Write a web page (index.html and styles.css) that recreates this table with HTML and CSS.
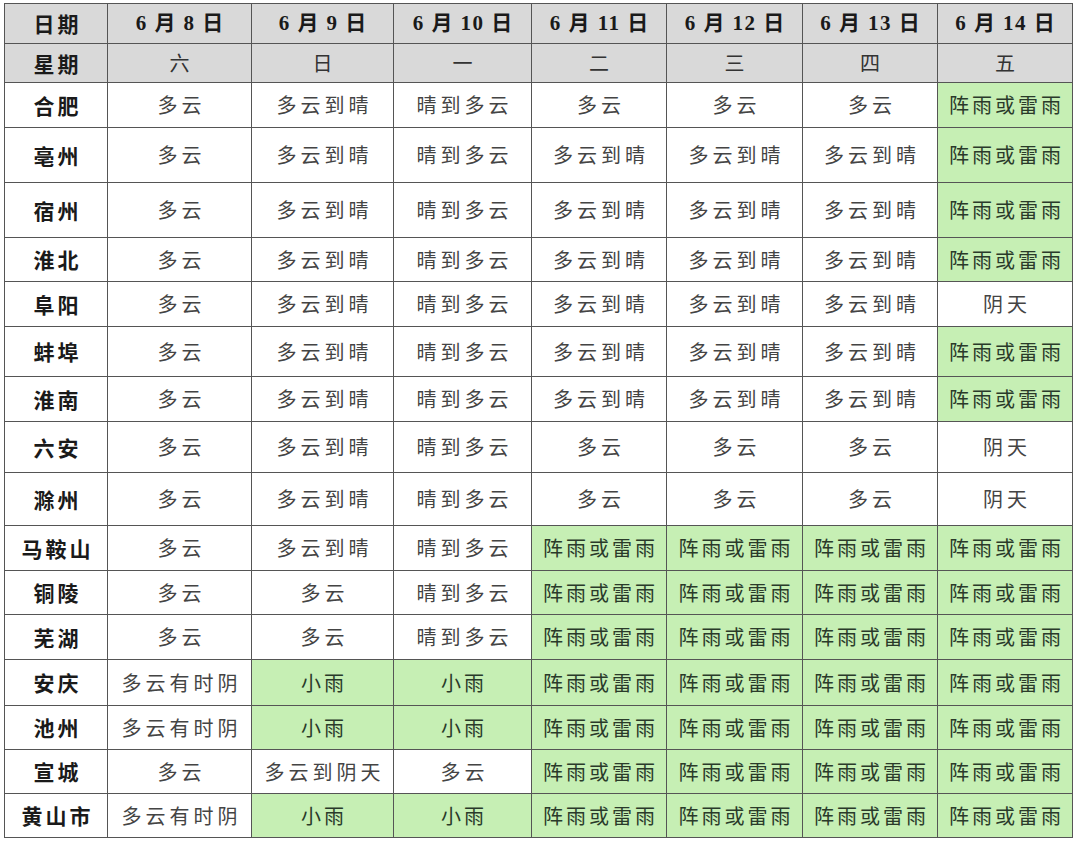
FILE: index.html
```html
<!DOCTYPE html>
<html lang="zh">
<head>
<meta charset="utf-8">
<link rel="stylesheet" href="styles.css">
</head>
<body>
<table class="wx">
<colgroup>
<col class="c0"><col class="c1"><col class="c2"><col class="c3"><col class="c4"><col class="c5"><col class="c6"><col class="c7">
</colgroup>
<tr class="hd r40"><th class="city">日期</th><th>6 月 8 日</th><th>6 月 9 日</th><th>6 月 10 日</th><th>6 月 11 日</th><th>6 月 12 日</th><th>6 月 13 日</th><th>6 月 14 日</th></tr>
<tr class="hd wk r39"><th class="city">星期</th><td>六</td><td>日</td><td>一</td><td>二</td><td>三</td><td>四</td><td>五</td></tr>
<tr class="r45"><th class="city">合肥</th><td>多云</td><td>多云到晴</td><td>晴到多云</td><td>多云</td><td>多云</td><td>多云</td><td class="g">阵雨或雷雨</td></tr>
<tr class="r55"><th class="city">亳州</th><td>多云</td><td>多云到晴</td><td>晴到多云</td><td>多云到晴</td><td>多云到晴</td><td>多云到晴</td><td class="g">阵雨或雷雨</td></tr>
<tr class="r55"><th class="city">宿州</th><td>多云</td><td>多云到晴</td><td>晴到多云</td><td>多云到晴</td><td>多云到晴</td><td>多云到晴</td><td class="g">阵雨或雷雨</td></tr>
<tr class="r44"><th class="city">淮北</th><td>多云</td><td>多云到晴</td><td>晴到多云</td><td>多云到晴</td><td>多云到晴</td><td>多云到晴</td><td class="g">阵雨或雷雨</td></tr>
<tr class="r45"><th class="city">阜阳</th><td>多云</td><td>多云到晴</td><td>晴到多云</td><td>多云到晴</td><td>多云到晴</td><td>多云到晴</td><td>阴天</td></tr>
<tr class="r50"><th class="city">蚌埠</th><td>多云</td><td>多云到晴</td><td>晴到多云</td><td>多云到晴</td><td>多云到晴</td><td>多云到晴</td><td class="g">阵雨或雷雨</td></tr>
<tr class="r45"><th class="city">淮南</th><td>多云</td><td>多云到晴</td><td>晴到多云</td><td>多云到晴</td><td>多云到晴</td><td>多云到晴</td><td class="g">阵雨或雷雨</td></tr>
<tr class="r51"><th class="city">六安</th><td>多云</td><td>多云到晴</td><td>晴到多云</td><td>多云</td><td>多云</td><td>多云</td><td>阴天</td></tr>
<tr class="r53"><th class="city">滁州</th><td>多云</td><td>多云到晴</td><td>晴到多云</td><td>多云</td><td>多云</td><td>多云</td><td>阴天</td></tr>
<tr class="r45"><th class="city">马鞍山</th><td>多云</td><td>多云到晴</td><td>晴到多云</td><td class="g">阵雨或雷雨</td><td class="g">阵雨或雷雨</td><td class="g">阵雨或雷雨</td><td class="g">阵雨或雷雨</td></tr>
<tr class="r44"><th class="city">铜陵</th><td>多云</td><td>多云</td><td>晴到多云</td><td class="g">阵雨或雷雨</td><td class="g">阵雨或雷雨</td><td class="g">阵雨或雷雨</td><td class="g">阵雨或雷雨</td></tr>
<tr class="r45"><th class="city">芜湖</th><td>多云</td><td>多云</td><td>晴到多云</td><td class="g">阵雨或雷雨</td><td class="g">阵雨或雷雨</td><td class="g">阵雨或雷雨</td><td class="g">阵雨或雷雨</td></tr>
<tr class="r46"><th class="city">安庆</th><td>多云有时阴</td><td class="g">小雨</td><td class="g">小雨</td><td class="g">阵雨或雷雨</td><td class="g">阵雨或雷雨</td><td class="g">阵雨或雷雨</td><td class="g">阵雨或雷雨</td></tr>
<tr class="r44"><th class="city">池州</th><td>多云有时阴</td><td class="g">小雨</td><td class="g">小雨</td><td class="g">阵雨或雷雨</td><td class="g">阵雨或雷雨</td><td class="g">阵雨或雷雨</td><td class="g">阵雨或雷雨</td></tr>
<tr class="r44"><th class="city">宣城</th><td>多云</td><td>多云到阴天</td><td>多云</td><td class="g">阵雨或雷雨</td><td class="g">阵雨或雷雨</td><td class="g">阵雨或雷雨</td><td class="g">阵雨或雷雨</td></tr>
<tr class="r44"><th class="city">黄山市</th><td>多云有时阴</td><td class="g">小雨</td><td class="g">小雨</td><td class="g">阵雨或雷雨</td><td class="g">阵雨或雷雨</td><td class="g">阵雨或雷雨</td><td class="g">阵雨或雷雨</td></tr>
</table>
</body>
</html>
```

FILE: styles.css
```css
html, body {
  margin: 0;
  padding: 0;
  background: #ffffff;
}
body {
  padding: 3px 0 0 4px;
}
.wx {
  border-collapse: collapse;
  table-layout: fixed;
  width: 1068px;
  font-family: "Noto Sans CJK SC", sans-serif;
  color: #444444;
}
.c0 { width: 103px; }
.c1 { width: 144px; }
.c2 { width: 142px; }
.c3 { width: 138px; }
.c4 { width: 135px; }
.c5 { width: 136px; }
.c6 { width: 135px; }
.c7 { width: 135px; }
.wx th, .wx td {
  border: 1.5px solid #555555;
  text-align: center;
  vertical-align: middle;
  padding: 0;
  font-size: 20px;
  font-weight: 400;
  letter-spacing: 4px;
  text-indent: 4px;
  line-height: 1;
  white-space: nowrap;
  overflow: hidden;
}
.wx .city {
  font-weight: 700;
  color: #1a1a1a;
  font-size: 21px;
  letter-spacing: 3px;
  text-indent: 3px;
}
.hd th, .hd td {
  background: #d9d9d9;
}
.hd th:not(.city) {
  font-family: "Liberation Serif", "Noto Sans CJK SC", serif;
  font-weight: 700;
  font-size: 21px;
  color: #1a1a1a;
  letter-spacing: 1.5px;
  text-indent: 1.5px;
}
.wk td {
  color: #333333;
}
.wx td.g {
  background: #c6efb4;
  color: #2a3a2a;
  letter-spacing: 3px;
  text-indent: 3px;
}
.r39 { height: 39px; }
.r40 { height: 40px; }
.r44 { height: 44px; }
.r45 { height: 45px; }
.r46 { height: 46px; }
.r50 { height: 50px; }
.r51 { height: 51px; }
.r53 { height: 53px; }
.r55 { height: 55px; }
```
